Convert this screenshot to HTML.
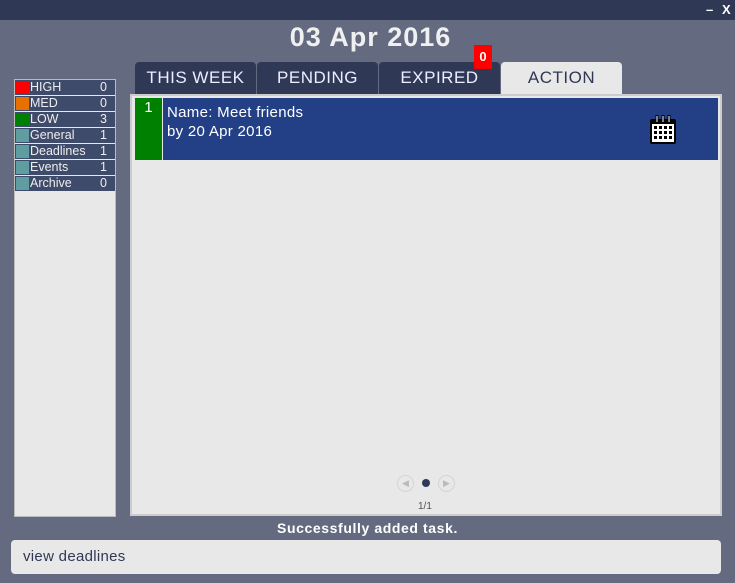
<!DOCTYPE html>
<html><head><style>
*{margin:0;padding:0;box-sizing:border-box}
body{width:735px;height:583px;background:#646b80;font-family:"Liberation Sans",sans-serif;position:relative;overflow:hidden}
.a{position:absolute}
.tb{left:0;top:0;width:735px;height:20px;background:#2f3956;color:#fff;font-size:13px;font-weight:bold}
.tab{top:62px;height:32px;width:121px;background:#2f3956;color:#eef;font-size:17px;text-align:center;line-height:32px;border-radius:4px 4px 0 0;letter-spacing:.5px}
.row{left:15px;width:100px;height:15px;background:#3f4b6a;color:#eee;font-size:12.5px;line-height:15px}
.row i{position:absolute;left:1px;top:1px;width:13px;height:13px}
.row span{position:absolute;left:15px}
.row b{position:absolute;right:8px;font-weight:normal}
</style></head><body>
<div class="a tb"><span class="a" style="left:706px;top:2px">–</span><span class="a" style="left:722px;top:2px">X</span></div>
<div class="a" style="left:0;top:22px;width:741px;text-align:center;color:#f0f0f0;font-size:27px;font-weight:bold;letter-spacing:1px">03 Apr 2016</div>
<div class="a" style="left:14px;top:79px;width:102px;height:438px;background:#e8e8e8;border:1px solid #bbb"></div>
<div class="a row" style="top:80px"><i style="background:#f00"></i><span>HIGH</span><b>0</b></div>
<div class="a row" style="top:96px"><i style="background:#e87000"></i><span>MED</span><b>0</b></div>
<div class="a row" style="top:112px"><i style="background:#008000"></i><span>LOW</span><b>3</b></div>
<div class="a row" style="top:128px"><i style="background:#5f9ea0"></i><span>General</span><b>1</b></div>
<div class="a row" style="top:144px"><i style="background:#5f9ea0"></i><span>Deadlines</span><b>1</b></div>
<div class="a row" style="top:160px"><i style="background:#5f9ea0"></i><span>Events</span><b>1</b></div>
<div class="a row" style="top:176px"><i style="background:#5f9ea0"></i><span>Archive</span><b>0</b></div>
<div class="a tab" style="left:135px">THIS WEEK</div>
<div class="a tab" style="left:257px">PENDING</div>
<div class="a tab" style="left:379px">EXPIRED</div>
<div class="a tab" style="left:501px;background:#e8e8e8;color:#2f3956">ACTION</div>
<div class="a" style="left:474px;top:45px;width:18px;height:24px;background:#f00;color:#fff;font-weight:bold;font-size:13px;text-align:center;line-height:24px">0</div>
<div class="a" style="left:130px;top:94px;width:592px;height:422px;background:#e8e8e8;border:2px solid #ccc"></div>
<div class="a" style="left:135px;top:98px;width:27px;height:62px;background:#008000;color:#fff;font-size:15px;text-align:center;line-height:20px">1</div>
<div class="a" style="left:163px;top:98px;width:555px;height:62px;background:#233f86;color:#fff;font-size:15px;line-height:19px;padding:5px 0 0 4px;letter-spacing:.3px">Name: Meet friends<br>by 20 Apr 2016</div>
<svg class="a" style="left:649px;top:115px" width="28" height="30" viewBox="0 0 28 30">
<rect x="1" y="4" width="26" height="25" rx="2" fill="#000"/><rect x="3" y="9" width="22" height="18" fill="#fff"/>
<g fill="#000"><rect x="5" y="11" width="3" height="3"/><rect x="10" y="11" width="3" height="3"/><rect x="15" y="11" width="3" height="3"/><rect x="20" y="11" width="3" height="3"/><rect x="5" y="16" width="3" height="3"/><rect x="10" y="16" width="3" height="3"/><rect x="15" y="16" width="3" height="3"/><rect x="20" y="16" width="3" height="3"/><rect x="5" y="21" width="3" height="3"/><rect x="10" y="21" width="3" height="3"/><rect x="15" y="21" width="3" height="3"/><rect x="20" y="21" width="3" height="3"/></g>
<g fill="#fff" stroke="#000"><rect x="7" y="0.5" width="2" height="7"/><rect x="13" y="0.5" width="2" height="7"/><rect x="19" y="0.5" width="2" height="7"/></g></svg>
<div class="a" style="left:397px;top:475px;width:17px;height:17px;border-radius:50%;border:1px solid #d4d4d4;color:#bbb;font-size:9px;text-align:center;line-height:15px">◀</div>
<div class="a" style="left:422px;top:479px;width:8px;height:8px;border-radius:50%;background:#2f3956"></div>
<div class="a" style="left:438px;top:475px;width:17px;height:17px;border-radius:50%;border:1px solid #d4d4d4;color:#bbb;font-size:9px;text-align:center;line-height:15px">▶</div>
<div class="a" style="left:418px;top:501px;font-size:10px;color:#555">1/1</div>
<div class="a" style="left:0;top:520px;width:735px;text-align:center;color:#fff;font-size:14px;font-weight:bold;letter-spacing:.6px">Successfully added task.</div>
<div class="a" style="left:11px;top:540px;width:710px;height:34px;background:#e8e8e8;border-radius:4px;color:#2f3956;font-size:15px;line-height:34px;padding-left:12px;letter-spacing:.3px">view deadlines</div>
</body></html>
